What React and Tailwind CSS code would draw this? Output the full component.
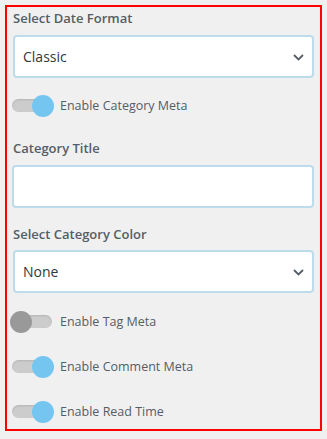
import { useState } from 'react';

function Toggle({ on }) {
  return (
    <div className="relative w-[44px] h-[22px] ml-[-3px] shrink-0">
      <div className="absolute left-[2px] top-[4px] w-[40px] h-[13px] rounded-full bg-[#cccccc] shadow-[inset_0_1px_2px_rgba(0,0,0,0.12)]" />
      <div
        className={`absolute top-0 w-[22px] h-[22px] rounded-full ${on ? 'left-[22px] bg-[#74c6f1]' : 'left-0 bg-[#999999]'}`}
      />
    </div>
  );
}

function ToggleRow({ on, label, className }) {
  const [checked, setChecked] = useState(on);
  return (
    <div className={`flex items-center h-[22px] cursor-pointer ${className}`} onClick={() => setChecked(!checked)}>
      <Toggle on={checked} />
      <span className="ml-[6px] text-[12.5px] leading-[22px] text-[#555d66]">{label}</span>
    </div>
  );
}

function SelectBox({ value, className }) {
  return (
    <div className={`relative h-[43px] bg-white border-2 border-[#bcdcec] rounded-[4px] flex items-center pl-[8px] ${className}`}>
      <span className="text-[14px] text-[#32373c]">{value}</span>
      <svg className="absolute right-[8px] top-[17px]" width="11" height="7" viewBox="0 0 11 7" fill="none">
        <path d="M1 1l4.5 4.5L10 1" stroke="#555d66" strokeWidth="1.8" />
      </svg>
    </div>
  );
}

function Label({ children, className }) {
  return (
    <div className={`h-[20px] leading-[20px] text-[13px] font-semibold text-[#555d66] ${className}`}>{children}</div>
  );
}

export default function App() {
  return (
    <div className="min-h-[439px] bg-[#f0f0f0] p-[5px] font-['Open_Sans',sans-serif]">
      <div className="border-2 border-[#ff0000] px-[6px] pt-[1px] pb-[6px] flex flex-col">
        <Label>Select Date Format</Label>
        <SelectBox value="Classic" className="mt-[7px]" />
        <ToggleRow on label="Enable Category Meta" className="mt-[17px]" />

        <Label className="mt-[21px]">Category Title</Label>
        <input type="text" className="mt-[7px] h-[43px] bg-white border-2 border-[#bcdcec] rounded-[4px] ml-[-1px] outline-none px-[8px]" />

        <Label className="mt-[16px]">Select Category Color</Label>
        <SelectBox value="None" className="mt-[6px]" />

        <ToggleRow on={false} label="Enable Tag Meta" className="mt-[18px]" />
        <ToggleRow on label="Enable Comment Meta" className="mt-[23px]" />
        <ToggleRow on label="Enable Read Time" className="mt-[23px]" />
      </div>
    </div>
  );
}
